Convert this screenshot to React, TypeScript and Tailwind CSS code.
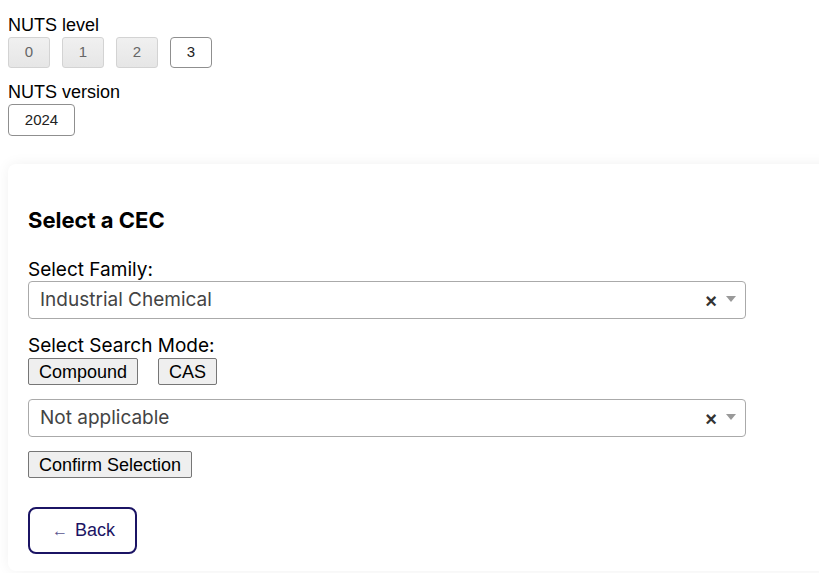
import React from "react";

const levels = ["0", "1", "2", "3"];
const selectedLevel = "3";

function LevelButton({ label, active }: { label: string; active: boolean }) {
  return (
    <button
      className={
        active
          ? "h-[31px] w-[42px] rounded-[4px] border border-[#8f8f8f] bg-white text-[15px] text-[#222]"
          : "h-[31px] w-[42px] rounded-[3px] border border-[#d3d3d3] bg-gradient-to-b from-[#f0f0f0] to-[#e6e6e6] text-[15px] text-[#666]"
      }
    >
      {label}
    </button>
  );
}

function SelectBox({ value }: { value: string }) {
  return (
    <div className="flex h-[38px] w-[718px] items-center rounded-[4px] border border-[#aaaaaa] bg-white pl-[11px] pr-[9px]">
      <span className="flex-1 text-[19px] text-[#444] font-['Inter',sans-serif]">{value}</span>
      <span className="mr-[9px] mt-[2px] text-[20px] font-bold leading-none text-[#333] font-['Liberation_Sans',sans-serif]">
        ×
      </span>
      <span className="mb-[2px] h-0 w-0 border-x-[5px] border-t-[6px] border-x-transparent border-t-[#999]" />
    </div>
  );
}

function NativeButton({ children }: { children: React.ReactNode }) {
  return (
    <button className="h-[27px] rounded-[2px] border border-[#767676] bg-[#efefef] px-[10px] text-[18px] leading-none text-black">
      {children}
    </button>
  );
}

export default function App() {
  return (
    <div className="h-screen w-full overflow-hidden bg-white font-['Liberation_Sans',Arial,sans-serif]">
      <div className="pl-2 pt-[15px]">
        <div className="text-[18px] leading-[21px] text-black">NUTS level</div>
        <div className="mt-[1px] flex gap-[12px]">
          {levels.map((l) => (
            <LevelButton key={l} label={l} active={l === selectedLevel} />
          ))}
        </div>
        <div className="mt-[14px] text-[18px] leading-[21px] text-black">NUTS version</div>
        <button className="mt-[1px] h-[32px] w-[67px] rounded-[4px] border border-[#8f8f8f] bg-white text-[15px] text-[#222]">
          2024
        </button>
      </div>

      <div className="ml-2 mt-[28px] w-[840px] rounded-lg bg-white px-5 pb-[17px] pt-[42px] shadow-[0_0_14px_rgba(0,0,0,0.06)]">
        <h3 className="text-[22px] font-bold leading-[28px] text-black font-['Inter',sans-serif]">Select a CEC</h3>

        <div className="mt-[24px] text-[19px] leading-[23px] text-black font-['Inter',sans-serif]">Select Family:</div>
        <SelectBox value="Industrial Chemical" />

        <div className="mt-[15px] text-[19px] leading-[23px] text-black font-['Inter',sans-serif]">Select Search Mode:</div>
        <div className="mt-[1px] flex gap-[20px]">
          <NativeButton>Compound</NativeButton>
          <NativeButton>CAS</NativeButton>
        </div>

        <div className="mt-[14px]">
          <SelectBox value="Not applicable" />
        </div>

        <div className="mt-[14px]">
          <NativeButton>Confirm Selection</NativeButton>
        </div>

        <button className="mt-[29px] flex h-[47px] items-center gap-[7px] rounded-[8px] border-2 border-[#1b1464] bg-white pl-[22px] pr-[20px] text-[18px] text-[#1b1464]">
          <span className="text-[16px] text-[#5a5690]">←</span>
          <span>Back</span>
        </button>
      </div>
    </div>
  );
}
